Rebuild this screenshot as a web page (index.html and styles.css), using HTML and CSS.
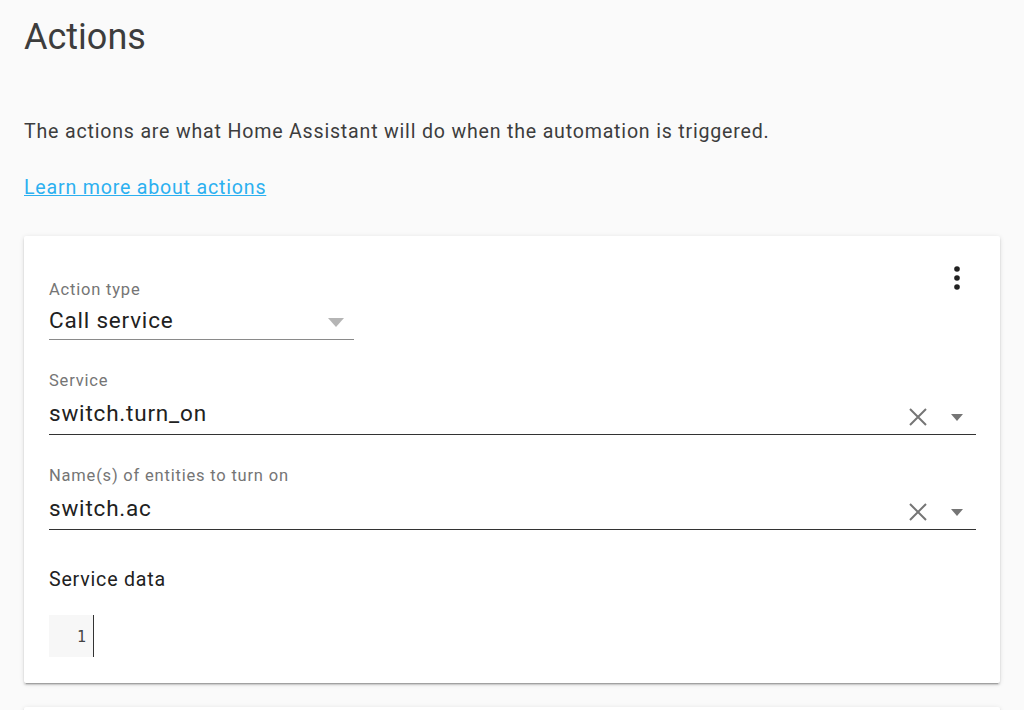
FILE: index.html
```html
<!DOCTYPE html>
<html lang="en">
<head>
  <meta charset="UTF-8">
  <meta name="viewport" content="width=device-width, initial-scale=1.0">
  <title>Actions</title>
  <link rel="stylesheet" href="styles.css">
</head>
<body>
  <div class="page">
    <h1 class="title">Actions</h1>
    <p class="intro">The actions are what Home Assistant will do when the automation is triggered.</p>
    <a class="learn" href="#">Learn more about actions</a>

    <div class="card">
      <div class="card-menu">
        <svg width="10" height="26" viewBox="0 0 10 26">
          <circle cx="5" cy="4" r="2.8"/>
          <circle cx="5" cy="13" r="2.8"/>
          <circle cx="5" cy="22" r="2.8"/>
        </svg>
      </div>

      <div class="field field-type">
        <div class="field-label">Action type</div>
        <div class="field-row">
          <span class="field-value">Call service</span>
          <svg class="arrow-light" width="16" height="9" viewBox="0 0 16 9"><path d="M0 0H16L8 9Z"/></svg>
        </div>
      </div>

      <div class="field field-wide">
        <div class="field-label">Service</div>
        <div class="field-row">
          <span class="field-value">switch.turn_on</span>
          <svg class="clear" width="18" height="18" viewBox="0 0 18 18"><path d="M1 1L17 17M17 1L1 17"/></svg>
          <svg class="arrow" width="12" height="7" viewBox="0 0 12 7"><path d="M0 0H12L6 7Z"/></svg>
        </div>
      </div>

      <div class="field field-wide">
        <div class="field-label">Name(s) of entities to turn on</div>
        <div class="field-row">
          <span class="field-value">switch.ac</span>
          <svg class="clear" width="18" height="18" viewBox="0 0 18 18"><path d="M1 1L17 17M17 1L1 17"/></svg>
          <svg class="arrow" width="12" height="7" viewBox="0 0 12 7"><path d="M0 0H12L6 7Z"/></svg>
        </div>
      </div>

      <div class="section-label">Service data</div>
      <div class="editor">
        <div class="gutter">1</div>
        <div class="cursor"></div>
      </div>
    </div>

    <div class="card card-next"></div>
  </div>
</body>
</html>
```

FILE: styles.css
```css
body {
  margin: 0;
  background-color: #fafafa;
  font-family: Roboto, "Noto Sans", sans-serif;
  color: #212121;
  letter-spacing: 0.8px;
}

.page {
  padding: 0 24px;
}

.title {
  margin: 0;
  padding-top: 14px;
  font-size: 36px;
  font-weight: 400;
  line-height: 46px;
  letter-spacing: 0;
  color: #3d3d3d;
}

.intro {
  margin: 59px 0 0;
  font-size: 19.6px;
  line-height: 26px;
  color: #3d3d3d;
}

.learn {
  display: inline-block;
  margin-top: 30px;
  font-size: 19.6px;
  line-height: 26px;
  color: #2cb0f0;
}

.card {
  position: relative;
  margin-top: 35px;
  background-color: #fff;
  border-radius: 2px;
  box-shadow: 0 2px 2px rgba(0, 0, 0, 0.14), 0 1px 5px rgba(0, 0, 0, 0.12), 0 3px 1px -2px rgba(0, 0, 0, 0.2);
  padding: 43px 24px 26px 25px;
}

.card-next {
  margin-top: 24px;
  height: 10px;
  padding: 0;
}

.card-menu {
  position: absolute;
  top: 29px;
  right: 38px;
  fill: #212121;
}

.field {
  border-bottom: 1px solid #333;
}

.field-type {
  width: 305px;
  border-bottom-color: #8a8a8a;
}

.field-type .field-row {
  height: 38px;
}

.field-wide {
  margin-top: 30px;
}

.field-label {
  font-size: 16.5px;
  line-height: 22px;
  color: #757575;
}

.field-row {
  display: flex;
  align-items: center;
  height: 42px;
}

.field-value {
  flex: 1;
  font-size: 22.5px;
  line-height: 30px;
  color: #212121;
}

.arrow-light {
  fill: #b5b5b5;
  margin-right: 10px;
  margin-top: 5px;
}

.clear {
  stroke: #757575;
  stroke-width: 2;
  margin-right: 24px;
  margin-top: 8px;
}

.arrow {
  fill: #757575;
  margin-right: 13px;
  margin-top: 8px;
}

.section-label {
  margin-top: 37px;
  font-size: 19.6px;
  line-height: 26px;
  color: #212121;
}

.editor {
  display: flex;
  margin-top: 22px;
  height: 42px;
}

.gutter {
  width: 37px;
  padding-right: 7px;
  padding-top: 3px;
  background-color: #f7f7f7;
  text-align: right;
  font-family: "DejaVu Sans Mono", monospace;
  font-size: 15px;
  line-height: 39px;
  letter-spacing: 0;
  color: #444;
}

.cursor {
  width: 1px;
  background-color: #333;
}
```
